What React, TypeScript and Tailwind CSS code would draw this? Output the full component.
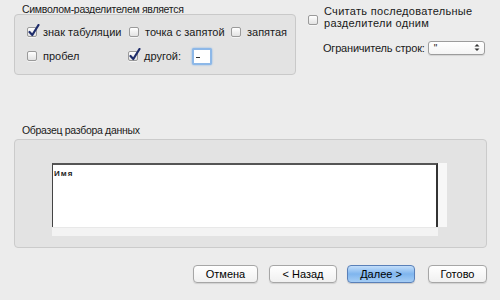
function Check({ checked }: { checked?: boolean }) {
  return (
    <span className="relative inline-block w-[10px] h-[10px] shrink-0 rounded-[2px] border border-[#9a9a9a] bg-gradient-to-b from-[#ffffff] to-[#e2e2e2] shadow-[0_1px_0_rgba(255,255,255,0.6)]">
      {checked && (
        <svg
          className="absolute left-[0px] top-[-4px]"
          width="12"
          height="13"
          viewBox="0 0 12 13"
        >
          <path
            d="M1.5 8 L4.3 11 L10.5 1"
            fill="none"
            stroke="#1f2d6b"
            strokeWidth="2.2"
            strokeLinecap="round"
            strokeLinejoin="round"
          />
        </svg>
      )}
    </span>
  );
}

function Option({ label, checked, w }: any) {
  return (
    <div className={`flex items-center gap-[6px] ${w}`}>
      <Check checked={checked} />
      <span>{label}</span>
    </div>
  );
}

function Button({ children, w, primary }: any) {
  return (
    <button
      className={
        primary
          ? `${w} h-[18px] rounded-[4px] border border-[#5a80b8] bg-gradient-to-b from-[#c3defa] via-[#7fb5ee] to-[#a5cdf5] text-[11px] leading-none text-black shadow-[0_1px_1px_rgba(0,0,0,0.15)]`
          : `${w} h-[18px] rounded-[4px] border border-[#a6a6a6] bg-gradient-to-b from-[#ffffff] to-[#f0f0f0] text-[11px] leading-none text-black shadow-[0_1px_1px_rgba(0,0,0,0.12)]`
      }
    >
      {children}
    </button>
  );
}

export default function App() {
  return (
    <div
      className="w-[500px] h-[300px] bg-[#ececec] text-[11px] text-[#1a1a1a] flex flex-col"
      style={{ fontFamily: '"Liberation Sans", Arial, sans-serif' }}
    >
      <div className="flex h-[76px] pt-[3px]">
        <div className="ml-[14px] w-[282px] flex flex-col">
          <div className="pl-[8px] h-[11px] leading-[11px] text-[10.5px] tracking-[-0.3px] mt-[1px] -mb-[1px]">
            Символом-разделителем является
          </div>
          <div className="h-[61px] rounded-[4px] border border-[#c9c9c9] bg-[#e3e3e3] pl-[12px] pt-[10px] flex flex-col gap-[8px]">
            <div className="flex items-center h-[14px]">
              <Option label="знак табуляции" checked w="w-[102px]" />
              <Option label="точка с запятой" w="w-[102px]" />
              <Option label="запятая" w="w-[60px]" />
            </div>
            <div className="flex items-center h-[18px]">
              <Option label="пробел" w="w-[101px]" />
              <Option label="другой:" checked w="w-[64px]" />
              <div className="w-[20px] h-[17px] rounded-[2px] border-[2px] border-[#8db8e8] bg-white flex items-center pl-[2px] shadow-[0_0_2px_#7aaee8]">
                <span className="block w-[4px] h-[1px] bg-[#333] mt-[2px]" />
              </div>
            </div>
          </div>
        </div>
        <div className="ml-[12px] flex flex-col">
          <div className="flex">
            <div className="mt-[10px]">
              <Check />
            </div>
            <div className="ml-[6px] leading-[12px] mt-[2px] tracking-[0.3px]">
              <div>Считать последовательные</div>
              <div>разделители одним</div>
            </div>
          </div>
          <div className="flex items-center mt-[10px] ml-[15px]">
            <span className="tracking-[-0.2px]">Ограничитель строк:</span>
            <div className="ml-[3px] w-[57px] h-[14px] rounded-[3px] border border-[#9c9c9c] bg-gradient-to-b from-white to-[#f4f4f4] flex items-center justify-between pl-[5px] pr-[4px] shadow-[0_1px_1px_rgba(0,0,0,0.1)]">
              <span className="text-[10px] leading-none mt-[3px]">"</span>
              <svg width="6" height="9" viewBox="0 0 6 9">
                <path d="M0.5 3.5 L3 1 L5.5 3.5 Z" fill="#333" />
                <path d="M0.5 5.5 L3 8 L5.5 5.5 Z" fill="#333" />
              </svg>
            </div>
          </div>
        </div>
      </div>

      <div className="ml-[14px] mt-[48px] w-[473px] flex flex-col">
        <div className="pl-[8px] h-[15px] leading-[12px] text-[10.5px] tracking-[-0.3px]">
          Образец разбора данных
        </div>
        <div className="h-[109px] rounded-[4px] border border-[#cbcbcb] bg-[#e3e3e3] pl-[37px] pt-[23px]">
          <div className="w-[395px] flex flex-col">
            <div className="flex">
              <div className="w-[386px] h-[64px] bg-white border-t-[2px] border-l-[1px] border-r-[2px] border-t-[#555] border-l-[#444] border-r-[#333] text-[8px] font-bold tracking-[1px] leading-[10px] pl-[1px] pt-[4px] text-[#222]">
                Имя
              </div>
              <div className="w-[9px] h-[64px] bg-[#f7f7f7]" />
            </div>
            <div className="w-[386px] h-[9px] bg-[#f3f3f3] border-t border-[#e8e8e8]" />
          </div>
        </div>
      </div>

      <div className="flex justify-end pr-[13px] mt-[17px]">
        <Button w="w-[65px]">Отмена</Button>
        <Button w="w-[68px] ml-[11px]">&lt; Назад</Button>
        <Button w="w-[68px] ml-[10px]" primary>
          Далее &gt;
        </Button>
        <Button w="w-[59px] ml-[13px]">Готово</Button>
      </div>
    </div>
  );
}
